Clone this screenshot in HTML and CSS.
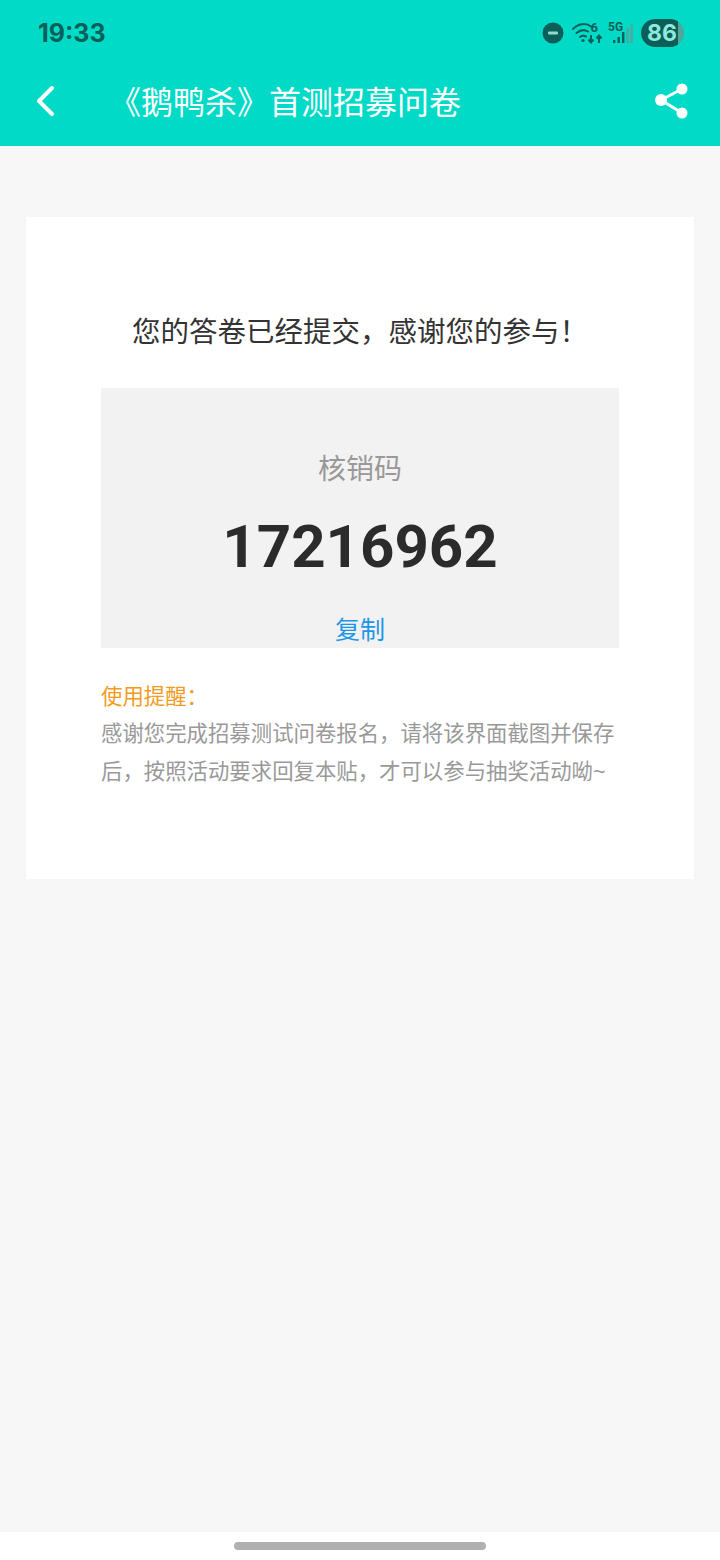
FILE: index.html
```html
<!DOCTYPE html>
<html lang="zh-CN">
<head>
    <meta charset="UTF-8">
    <meta name="viewport" content="width=device-width, initial-scale=1.0">
    <title>《鹅鸭杀》首测招募问卷</title>
    <link rel="stylesheet" href="styles.css">
</head>
<body>
    <div class="header">
        <div class="statusbar">
            <div class="time">19:33</div>
            <div class="status-icons">
                <svg class="icon-dnd" width="22" height="22" viewBox="0 0 22 22">
                    <circle cx="11" cy="11" r="10.5" fill="#0b5f58"/>
                    <rect x="6" y="9.5" width="10" height="3" rx="1" fill="#8fdcd2"/>
                </svg>
                <svg class="icon-wifi" width="32" height="26" viewBox="0 0 32 26">
                    <g fill="none" stroke="#0b5f58" stroke-width="2" stroke-linecap="round">
                        <path d="M1 9C6 3.500 14 2.500 19 6.500"/>
                        <path d="M4.500 13C8 10 12.500 9.500 16 11.500"/>
                        <path d="M8 17c2-1.500 4-1.500 6-.5"/>
                    </g>
                    <circle cx="11" cy="20.500" r="1.600" fill="#0b5f58"/>
                    <text class="wifi-six" x="18.500" y="11.500">6</text>
                    <path d="M19 15v7M16.500 19.500l2.500 3 2.500-3" fill="none" stroke="#0b5f58" stroke-width="2"/>
                    <path d="M27 23v-7M24.500 18.500l2.500-3 2.500 3" fill="none" stroke="#0b5f58" stroke-width="2"/>
                </svg>
                <div class="signal">
                    <span class="five-g">5G</span>
                    <svg class="bars" width="22" height="22" viewBox="0 0 22 22">
                        <rect x="1" y="18" width="2.400" height="3" fill="#0b5f58"/>
                        <rect x="5.500" y="15" width="2.400" height="6" fill="#0b5f58"/>
                        <rect x="10" y="10" width="2.400" height="11" fill="#0b5f58"/>
                        <rect x="14.500" y="6" width="2.400" height="15" fill="#4fa79d"/>
                        <rect x="18.500" y="2" width="2.400" height="19" fill="#4fa79d"/>
                    </svg>
                </div>
                <div class="battery">
                    <div class="battery-fill">86</div>
                </div>
            </div>
        </div>
        <div class="titlebar">
            <svg class="back" width="24" height="36" viewBox="0 0 24 36">
                <path d="M18 5L5 18l13 13" fill="none" stroke="#fff" stroke-width="4" stroke-linecap="round" stroke-linejoin="round"/>
            </svg>
            <div class="title">《鹅鸭杀》首测招募问卷</div>
            <svg class="share" width="34" height="38" viewBox="0 0 34 38">
                <path d="M28 7L7 18l21 13" fill="none" stroke="#fff" stroke-width="3"/>
                <circle cx="28" cy="7" r="5.500" fill="#fff"/>
                <circle cx="7" cy="18" r="6" fill="#fff"/>
                <circle cx="28" cy="31" r="5.500" fill="#fff"/>
            </svg>
        </div>
    </div>

    <div class="main">
        <div class="card">
            <h2 class="thanks">您的答卷已经提交，感谢您的参与！</h2>
            <div class="code-box">
                <div class="code-label">核销码</div>
                <div class="code">17216962</div>
                <a class="copy" href="#">复制</a>
            </div>
            <div class="notice">
                <div class="notice-title">使用提醒：</div>
                <p class="notice-text">感谢您完成招募测试问卷报名，请将该界面截图并保存后，按照活动要求回复本贴，才可以参与抽奖活动呦~</p>
            </div>
        </div>
    </div>

    <div class="navbar">
        <div class="home-bar"></div>
    </div>
</body>
</html>
```

FILE: styles.css
```css
* {
    box-sizing: border-box;
}

html, body {
    height: 100%;
}

body {
    margin: 0;
    display: flex;
    flex-direction: column;
    height: 1560px;
    background-color: #f7f7f7;
    font-family: "Liberation Sans", "Noto Sans CJK SC", sans-serif;
}

.header {
    height: 146px;
    background-color: #00dac6;
}

.statusbar {
    height: 68px;
    padding: 0 36px 2px 38px;
    display: flex;
    align-items: center;
    justify-content: space-between;
}

.time {
    font-family: Inter, "Liberation Sans", sans-serif;
    font-size: 25px;
    font-weight: 700;
    color: #0b5f58;
}

.status-icons {
    display: flex;
    align-items: center;
}

.icon-dnd {
    margin-right: 8px;
}

.icon-wifi {
    margin-right: 3px;
}

.wifi-six {
    font-family: Roboto, sans-serif;
    font-size: 13px;
    font-weight: 700;
    fill: #0b5f58;
}

.signal {
    position: relative;
    width: 27px;
    height: 26px;
    display: flex;
    justify-content: flex-end;
    align-items: flex-start;
    margin-right: 7px;
    padding-top: 2px;
}

.five-g {
    position: absolute;
    left: 1px;
    top: 0;
    font-family: Roboto, sans-serif;
    font-size: 12px;
    font-weight: 700;
    line-height: 14px;
    color: #0b5f58;
}

.battery {
    width: 43px;
    height: 28px;
    border-radius: 14px;
    background-color: #4fa79d;
    overflow: hidden;
}

.battery-fill {
    width: 37px;
    height: 28px;
    border-radius: 14px 0 0 14px;
    background-color: #0b5f58;
    color: #8fe8dc;
    font-family: Inter, "Liberation Sans", sans-serif;
    font-size: 23px;
    font-weight: 700;
    line-height: 28px;
    padding-left: 6px;
}

.titlebar {
    height: 78px;
    padding: 0 32px 12px 34px;
    display: flex;
    align-items: center;
}

.title {
    flex: 1;
    margin: 0 0 2px 51px;
    font-size: 32px;
    color: #fff;
    white-space: nowrap;
}

.main {
    flex: 1;
    padding: 71px 26px 0;
}

.card {
    height: 662px;
    padding: 93px 75px 0;
    background-color: #fff;
}

.thanks {
    margin: 0;
    font-size: 28.5px;
    font-weight: 400;
    line-height: 44px;
    color: #333;
    text-align: center;
}

.code-box {
    margin-top: 34px;
    height: 260px;
    background-color: #f2f2f2;
    text-align: center;
    padding-top: 60px;
}

.code-label {
    font-size: 28px;
    line-height: 44px;
    color: #999;
}

.code {
    margin-top: 19px;
    font-family: Roboto, sans-serif;
    font-size: 60px;
    font-weight: 700;
    line-height: 72px;
    color: #2b2b2b;
}

.copy {
    display: block;
    margin-top: 29px;
    font-size: 25px;
    line-height: 36px;
    color: #1e96e6;
    text-decoration: none;
}

.notice {
    margin-top: 32px;
}

.notice-title {
    font-size: 21.4px;
    line-height: 34px;
    color: #f29b1d;
}

.notice-text {
    margin: 1px 0 0;
    font-size: 21.4px;
    line-height: 38px;
    color: #999;
}

.navbar {
    height: 28px;
    background-color: #fff;
    display: flex;
    justify-content: center;
    padding-top: 10px;
}

.home-bar {
    width: 252px;
    height: 8px;
    border-radius: 4px;
    background-color: #b0b0b0;
}
```
